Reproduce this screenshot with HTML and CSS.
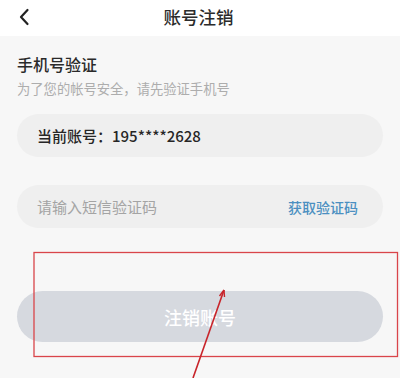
FILE: index.html
```html
<!DOCTYPE html>
<html lang="zh">
<head>
<meta charset="utf-8">
<link rel="stylesheet" href="styles.css">
</head>
<body>
<div class="page">
  <header class="header">
    <svg class="back" width="12" height="18" viewBox="0 0 12 18"><path d="M9.5 2 L3 9 L9.5 16" fill="none" stroke="#222" stroke-width="2.2" stroke-linecap="round" stroke-linejoin="round"/></svg>
    <h1 class="title">账号注销</h1>
  </header>
  <main class="content">
    <h2 class="sec-title">手机号验证</h2>
    <p class="sec-sub">为了您的帐号安全，请先验证手机号</p>
    <div class="field field-account">当前账号：195****2628</div>
    <div class="field field-code">
      <span class="placeholder">请输入短信验证码</span>
      <span class="get-code">获取验证码</span>
    </div>
    <button class="submit">注销账号</button>
  </main>
  <svg class="annot" width="400" height="378" viewBox="0 0 400 378">
    <rect x="34" y="252.5" width="363.5" height="104" fill="none" stroke="#d9454a" stroke-width="1.3"/>
    <path d="M193 378 L224 290" stroke="#c8242a" stroke-width="1.6" fill="none"/>
    <path d="M224 290 L219.5 296 M224 290 L224.5 297" stroke="#c8242a" stroke-width="1.4" fill="none"/>
  </svg>
</div>
</body>
</html>
```
FILE: styles.css
```css
* { box-sizing: border-box; }
html, body { margin: 0; padding: 0; }
body {
  width: 400px;
  height: 378px;
  overflow: hidden;
  background: #f7f7f7;
  font-family: "Noto Sans CJK SC", "Noto Sans", sans-serif;
}
.page { position: relative; width: 400px; height: 378px; }
.header {
  position: relative;
  height: 36px;
  background: #ffffff;
  display: flex;
  align-items: center;
  justify-content: center;
}
.back { position: absolute; left: 18px; top: 8px; }
.title {
  margin: 0;
  font-size: 17.5px;
  font-weight: 500;
  color: #2b2b2b;
  line-height: 24px;
  margin-top: -3px;
  margin-left: -3px;
}
.content { padding: 17px 17px 0; }
.sec-title {
  margin: 0;
  font-size: 16px;
  font-weight: 500;
  color: #2a2a2a;
  line-height: 22px;
}
.sec-sub {
  margin: 5px 0 0;
  font-size: 13.3px;
  color: #adadad;
  line-height: 18px;
}
.field {
  height: 43px;
  border-radius: 22px;
  background: #efefef;
  display: flex;
  align-items: center;
  padding: 0 25px 0 20px;
}
.field-account {
  margin-top: 16px;
  font-size: 15px;
  color: #262626;
  font-weight: 500;
}
.field-code {
  margin-top: 28px;
  justify-content: space-between;
}
.placeholder { font-size: 15px; color: #a4a4a4; }
.get-code { font-size: 14px; color: #4b8fc1; font-weight: 500; }
.submit {
  display: block;
  width: 100%;
  margin-top: 63px;
  height: 51px;
  border: none;
  border-radius: 26px;
  background: #d6d9df;
  color: #ffffff;
  font-family: inherit;
  font-size: 18px;
  font-weight: 500;
}
.annot { position: absolute; left: 0; top: 0; pointer-events: none; }
```
